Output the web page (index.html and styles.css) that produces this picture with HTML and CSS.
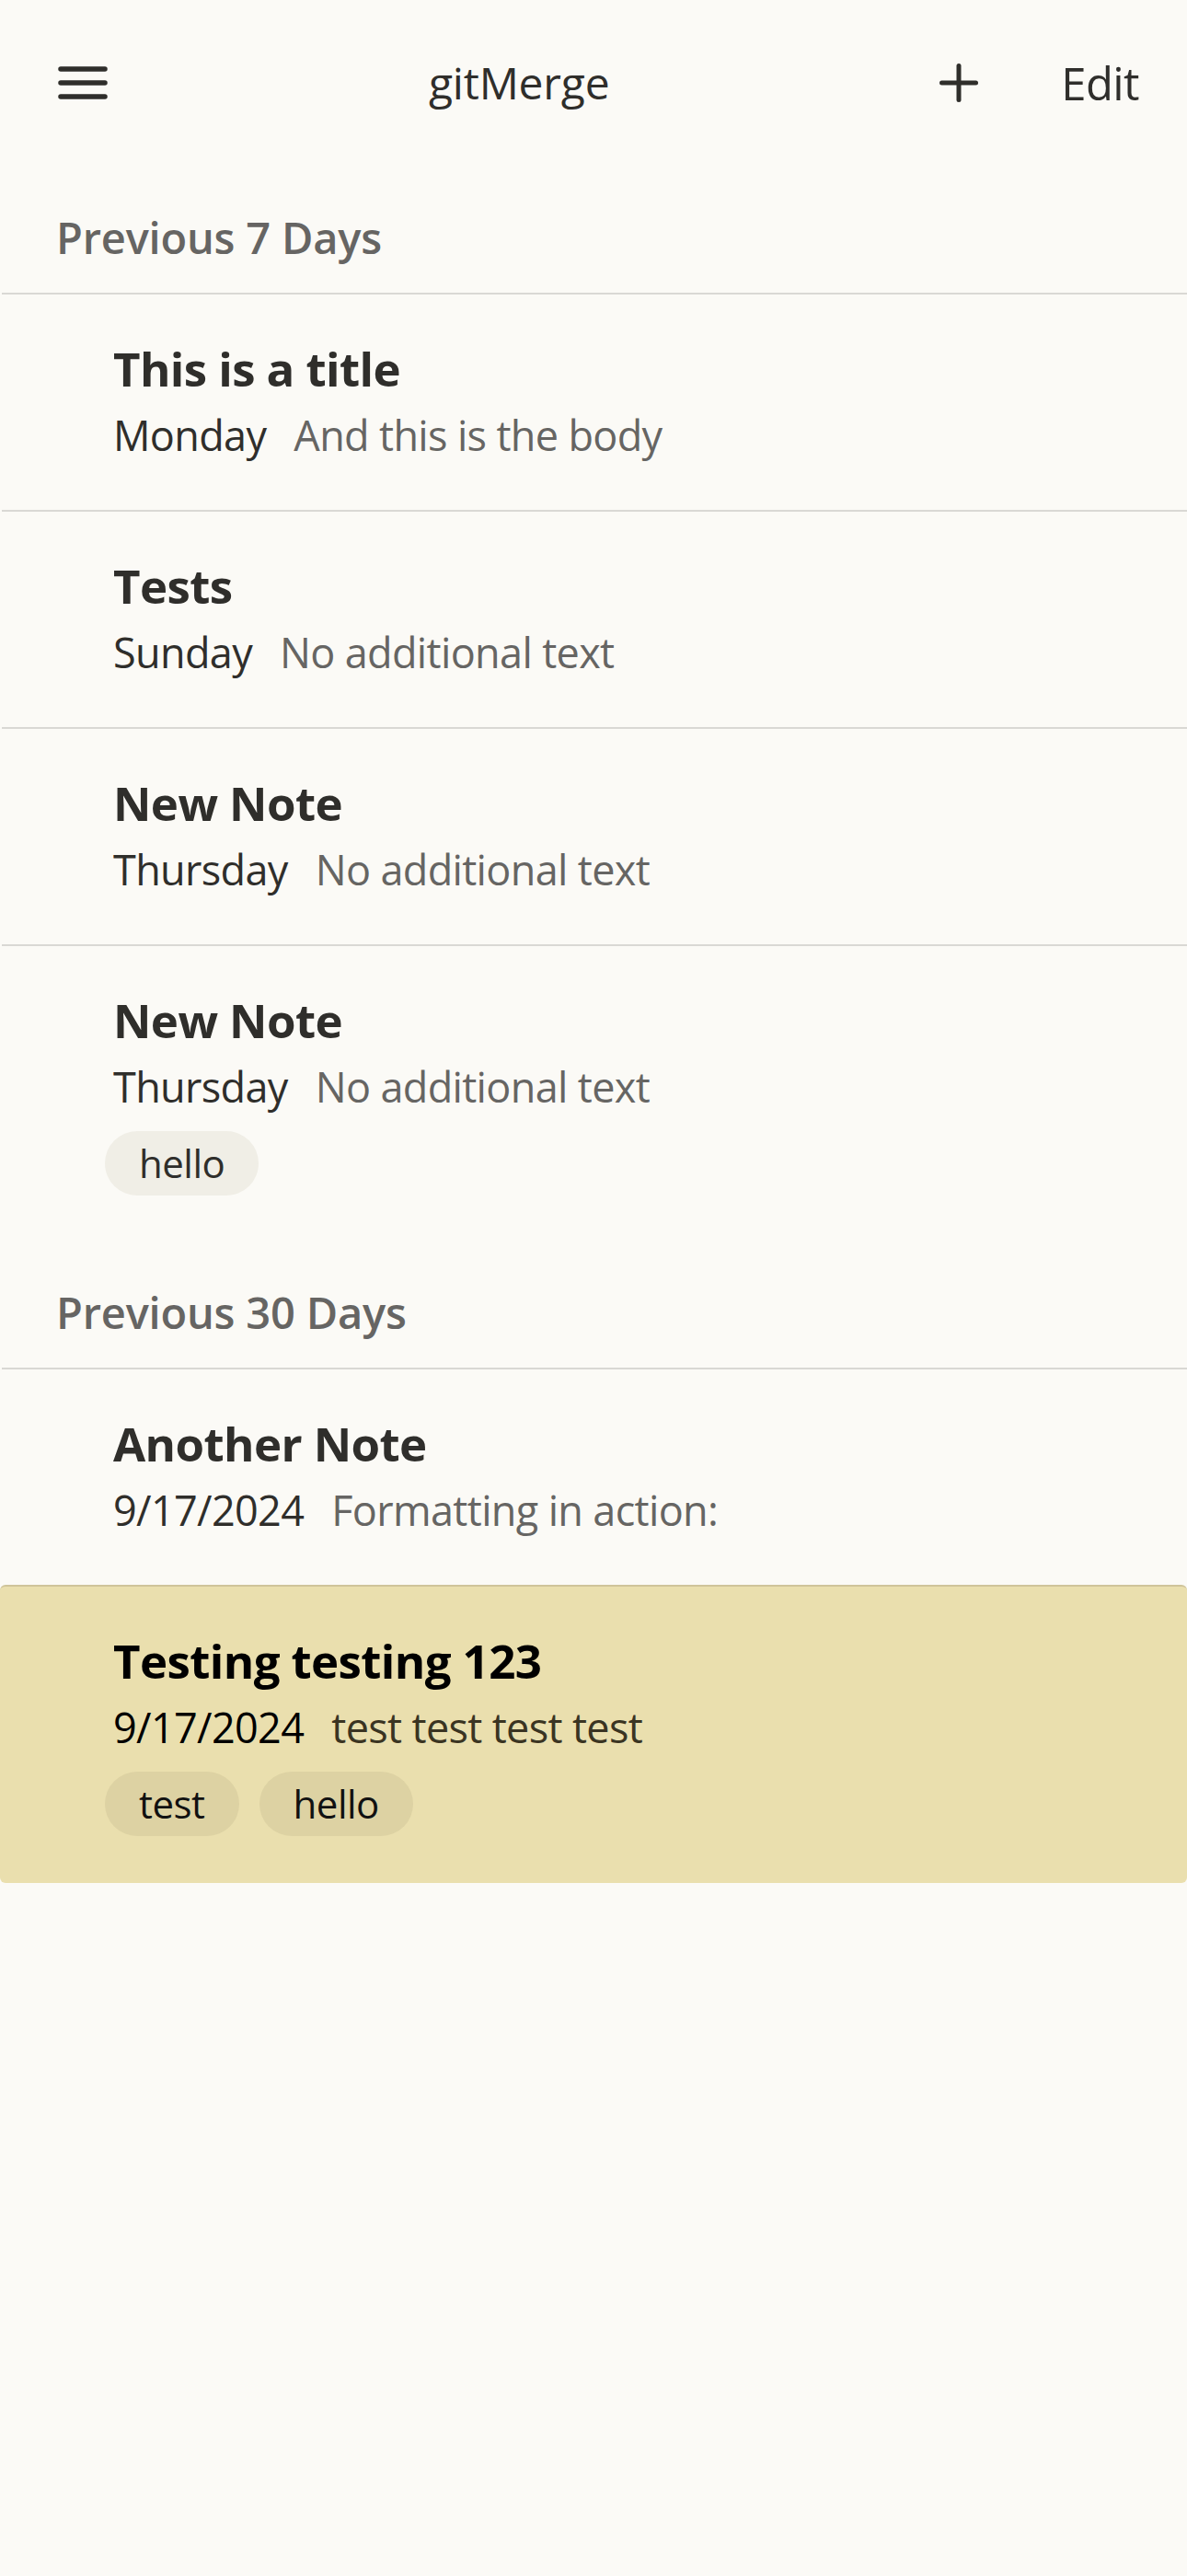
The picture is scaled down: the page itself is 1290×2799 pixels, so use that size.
FILE: index.html
```html
<!DOCTYPE html>
<html lang="en">
<head>
<meta charset="utf-8">
<title>gitMerge</title>
<link rel="stylesheet" href="styles.css">
</head>
<body>
<div class="app">
  <header class="topbar">
    <button class="icon-btn menu" aria-label="Menu">
      <svg width="54" height="36" viewBox="0 0 54 36"><g stroke="#2f2e2b" stroke-width="5.5" stroke-linecap="round"><line x1="3" y1="3" x2="51" y2="3"/><line x1="3" y1="18" x2="51" y2="18"/><line x1="3" y1="33" x2="51" y2="33"/></g></svg>
    </button>
    <div class="app-title">gitMerge</div>
    <button class="icon-btn plus" aria-label="New note">
      <svg width="42" height="42" viewBox="0 0 42 42"><g stroke="#2f2e2b" stroke-width="5" stroke-linecap="round"><line x1="21" y1="2.5" x2="21" y2="39.5"/><line x1="2.5" y1="21" x2="39.5" y2="21"/></g></svg>
    </button>
    <button class="text-btn">Edit</button>
  </header>

  <section class="group">
    <h2 class="group-title">Previous 7 Days</h2>
    <ul class="notes">
      <li class="note">
        <div class="note-title">This is a title</div>
        <div class="note-meta"><span class="note-date">Monday</span><span class="note-body">And this is the body</span></div>
      </li>
      <li class="note">
        <div class="note-title">Tests</div>
        <div class="note-meta"><span class="note-date">Sunday</span><span class="note-body">No additional text</span></div>
      </li>
      <li class="note">
        <div class="note-title">New Note</div>
        <div class="note-meta"><span class="note-date">Thursday</span><span class="note-body">No additional text</span></div>
      </li>
      <li class="note">
        <div class="note-title">New Note</div>
        <div class="note-meta"><span class="note-date">Thursday</span><span class="note-body">No additional text</span></div>
        <div class="tags"><span class="tag">hello</span></div>
      </li>
    </ul>
  </section>

  <section class="group">
    <h2 class="group-title">Previous 30 Days</h2>
    <ul class="notes">
      <li class="note">
        <div class="note-title">Another Note</div>
        <div class="note-meta"><span class="note-date">9/17/2024</span><span class="note-body">Formatting in action:</span></div>
      </li>
      <li class="note selected">
        <div class="note-title">Testing testing 123</div>
        <div class="note-meta"><span class="note-date">9/17/2024</span><span class="note-body">test test test test</span></div>
        <div class="tags"><span class="tag">test</span><span class="tag">hello</span></div>
      </li>
    </ul>
  </section>
</div>
</body>
</html>
```

FILE: styles.css
```css
* { box-sizing: border-box; }
html, body {
  margin: 0;
  padding: 0;
  background: #fbfaf6;
}
body {
  font-family: "Open Sans", "Noto Sans", sans-serif;
  color: #2f2e2b;
  min-height: 2799px;
}
.app { width: 1290px; }

.topbar {
  height: 180px;
  display: flex;
  align-items: center;
  padding: 0 52px 0 63px;
}
.icon-btn, .text-btn {
  background: none;
  border: 0;
  padding: 0;
  margin: 0;
  font: inherit;
  color: inherit;
  display: flex;
  align-items: center;
}
.menu svg, .plus svg { display: block; }
.app-title {
  flex: 1;
  text-align: center;
  padding-right: 10px;
  font-size: 48px;
  line-height: 64px;
  letter-spacing: -0.2px;
  color: #2f2e2b;
}
.plus { margin-right: 90px; }
.text-btn {
  font-size: 49px;
  line-height: 64px;
  letter-spacing: -0.6px;
  color: #2f2e2b;
}

.group-title {
  margin: 46px 0 0 0;
  padding: 0 0 28px 61px;
  font-size: 47px;
  line-height: 64px;
  font-weight: 600;
  letter-spacing: -0.2px;
  color: #666563;
}
.notes {
  list-style: none;
  margin: 0;
  padding: 0;
}
.note {
  margin-left: 2px;
  border-top: 2px solid #d9d8d4;
  padding: 45px 0 49px 121px;
}
.note-title {
  font-size: 51px;
  line-height: 70px;
  font-weight: 700;
  letter-spacing: -0.6px;
  color: #2f2e2b;
}
.note-meta {
  margin-top: 6px;
  display: flex;
  gap: 30px;
  font-size: 45px;
  line-height: 64px;
  letter-spacing: -0.65px;
}
.note-date { color: #2f2e2b; }
.note-body { color: #666563; }

.tags {
  display: flex;
  gap: 22px;
  margin-top: 16px;
  margin-left: -9px;
}
.tag {
  height: 70px;
  padding: 0 37px;
  border-radius: 35px;
  background: #f0eee6;
  font-size: 42px;
  line-height: 70px;
  letter-spacing: -0.5px;
  color: #2f2e2b;
}

.note.selected {
  margin-left: 0;
  padding-left: 123px;
  padding-bottom: 51px;
  background: #eadfae;
  border-top-color: #cfc49a;
  border-radius: 6px;
}
.note.selected .note-title,
.note.selected .note-date { color: #000; }
.note.selected .note-body { color: #3a3422; }
.note.selected .tag {
  background: #ddd2a3;
  color: #111;
}
```
